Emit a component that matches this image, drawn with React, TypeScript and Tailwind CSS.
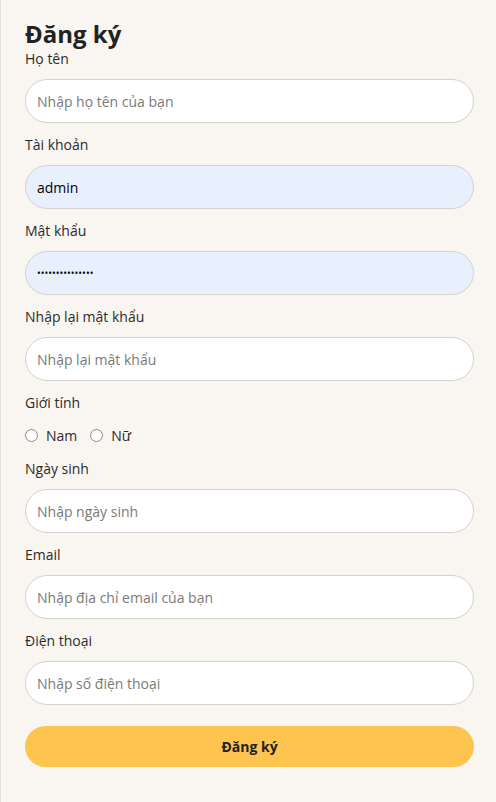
import { useState } from "react";

const Field = ({
  label,
  placeholder,
  value,
  type = "text",
  filled = false,
}: {
  label: string;
  placeholder?: string;
  value?: string;
  type?: string;
  filled?: boolean;
}) => {
  return (
    <div className="flex flex-col">
      <label className="h-5 text-[14px] leading-5 text-[#2b2b2b]">{label}</label>
      <input
        type={type}
        placeholder={placeholder}
        defaultValue={value}
        className={
          "mt-2.5 h-11 w-full rounded-full border border-[#d4d2cf] px-[11px] outline-none placeholder:text-[#7a7a7a] " +
          (filled ? "bg-[#e8f0fe] text-black " : "bg-white text-[#2b2b2b] ") +
          (type === "password" ? "text-[10px]" : "text-[14px]")
        }
      />
    </div>
  );
};

export default function App() {
  const [gender, setGender] = useState("");

  return (
    <div
      className="min-h-screen border-l border-[#e3dfd9] bg-[#f9f6f1] pl-6 pr-[22px] pt-[20px] pb-8"
      style={{ fontFamily: '"Open Sans", "Noto Sans", sans-serif' }}
    >
      <h1 className="text-[24px] font-bold leading-[28px] text-[#222]">Đăng ký</h1>

      <div className="mt-px flex flex-col gap-3">
        <Field label="Họ tên" placeholder="Nhập họ tên của bạn" />
        <Field label="Tài khoản" value="admin" filled />
        <Field label="Mật khẩu" value="passwordpasswor" type="password" filled />
        <Field label="Nhập lại mật khẩu" placeholder="Nhập lại mật khẩu" />

        <div className="flex flex-col">
          <span className="h-5 text-[14px] leading-5 text-[#2b2b2b]">Giới tính</span>
          <div className="mt-3 flex h-5 items-center gap-[13px] text-[14px] text-[#2b2b2b]">
            {["Nam", "Nữ"].map((g) => (
              <label key={g} className="flex items-center gap-2">
                <span
                  onClick={() => setGender(g)}
                  className="flex h-[13px] w-[13px] items-center justify-center rounded-full border border-[#8a8a8a] bg-white"
                >
                  {gender === g && <span className="h-[7px] w-[7px] rounded-full bg-[#2b2b2b]" />}
                </span>
                <span>{g}</span>
              </label>
            ))}
          </div>
        </div>

        <div className="pt-0.5">
          <Field label="Ngày sinh" placeholder="Nhập ngày sinh" />
        </div>
        <Field label="Email" placeholder="Nhập địa chỉ email của bạn" />
        <Field label="Điện thoại" placeholder="Nhập số điện thoại" />
      </div>

      <button className="mt-[21px] h-[41px] w-full rounded-full bg-[#fdc44f] text-[14px] font-bold text-[#222]">
        Đăng ký
      </button>
    </div>
  );
}
